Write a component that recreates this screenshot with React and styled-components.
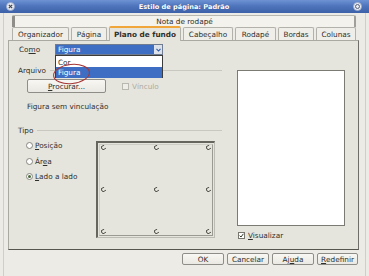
import React from 'react';
import styled, { createGlobalStyle } from 'styled-components';

const GlobalStyle = createGlobalStyle`
  html, body { margin: 0; padding: 0; }
  body {
    background: #ecebe5;
    font-family: "DejaVu Sans", "Liberation Sans", sans-serif;
    font-size: 7.3px;
    color: #2f2f2c;
  }
  u { text-decoration-thickness: 1px; text-underline-offset: 1px; }
`;

const Window = styled.div`
  width: 369px;
  height: 276px;
  display: flex;
  flex-direction: column;
  background: #ecebe5;
  overflow: hidden;
`;

const TitleBar = styled.div`
  height: 13px;
  flex: none;
  display: flex;
  align-items: center;
  justify-content: space-between;
  padding: 0 7px 0 6px;
  background: linear-gradient(#6e93d4, #4f75bd 45%, #3c61a8);
  color: #fff;
  font-weight: bold;
  font-size: 6.6px;
  text-shadow: 0 0 1px #2a4a8a;
`;

const Frame = styled.div`
  flex: 1;
  display: flex;
  flex-direction: column;
  margin: 0 3px;
  padding: 2px 6px 0 4px;
  border-left: 1px solid #d0cfc7;
  border-right: 1px solid #d0cfc7;
`;

const TopTab = styled.div`
  height: 12px;
  box-sizing: border-box;
  margin: 0 3px 0 4px;
  display: flex;
  align-items: center;
  justify-content: center;
  background: #f3f2ed;
  border: 1px solid #b9b8b0;
  border-left: 3px solid #8f8e88;
  border-right: 2px solid #a09f99;
  border-bottom: none;
  border-radius: 2px 2px 0 0;
`;

const TabRow = styled.div`
  display: flex;
  gap: 2px;
  height: 13px;
  padding-left: 4px;
  position: relative;
  z-index: 1;
`;

const Tab = styled.div`
  width: ${p => p.$w}px;
  box-sizing: border-box;
  display: flex;
  align-items: center;
  justify-content: center;
  white-space: nowrap;
  border: 1px solid #b3b2aa;
  border-bottom: none;
  border-radius: 2px 2px 0 0;
  background: ${p => (p.$active ? '#e6e5dd' : '#efeee8')};
  font-weight: ${p => (p.$active ? 'bold' : 'normal')};
  border-top: ${p => (p.$active ? '2px solid #f0a63a' : '1px solid #b3b2aa')};
  height: ${p => (p.$active ? 15 : 13)}px;
  margin-top: ${p => (p.$active ? -1 : 0)}px;
`;

const Panel = styled.div`
  height: 210px;
  box-sizing: border-box;
  display: flex;
  gap: 15px;
  padding: 3px 12px 0 9px;
  background: #e6e5dd;
  border: 1px solid #aaa9a1;
  border-right-color: #6f6f69;
  border-bottom-color: #56564f;
`;

const LeftCol = styled.div`
  width: 204px;
  display: flex;
  flex-direction: column;
`;

const RightCol = styled.div`
  width: 108px;
  display: flex;
  flex-direction: column;
`;

const ComoRow = styled.div`
  height: 11px;
  display: flex;
  align-items: center;
`;

const Label = styled.span`
  width: 36px;
  padding-left: 1px;
`;

const Combo = styled.div`
  position: relative;
  width: 108px;
  height: 11px;
  box-sizing: border-box;
  display: flex;
  border: 1px solid #6f7b90;
  background: #fff;
`;

const ComboValue = styled.div`
  flex: 1;
  display: flex;
  align-items: center;
  padding-left: 2px;
  background: #3d6ec3;
  color: #fff;
`;

const ComboArrow = styled.div`
  width: 8px;
  display: flex;
  align-items: center;
  justify-content: center;
  background: #dde2ea;
`;

const DropList = styled.div`
  position: absolute;
  top: 10px;
  left: -1px;
  width: 108px;
  height: 23px;
  box-sizing: border-box;
  padding-top: 1px;
  background: #fff;
  border: 1px solid #3c3c3a;
  z-index: 2;
`;

const DropItem = styled.div`
  height: ${p => (p.$sel ? 11 : 10)}px;
  display: flex;
  align-items: center;
  padding-left: 2px;
  background: ${p => (p.$sel ? '#3d6ec3' : 'transparent')};
  color: ${p => (p.$sel ? '#fff' : '#2f2f2c')};
`;

const Circle = styled.div`
  position: absolute;
  left: -3px;
  top: 19px;
  width: 35px;
  height: 18px;
  border: 1px solid #a53636;
  border-radius: 50%;
  transform: rotate(-6deg);
  z-index: 3;
`;

const SectionHead = styled.div`
  margin-top: ${p => p.$mt}px;
  height: 9px;
  display: flex;
  align-items: center;
  gap: 4px;
  &::after {
    content: '';
    flex: 1;
    height: 1px;
    background: #c9c8c0;
  }
`;

const ProcRow = styled.div`
  margin-top: 4px;
  height: 14px;
  padding-left: 9px;
  display: flex;
  align-items: center;
`;

const PushButton = styled.div`
  width: ${p => p.$w}px;
  height: ${p => p.$h || 12}px;
  box-sizing: border-box;
  display: flex;
  align-items: center;
  justify-content: center;
  background: linear-gradient(#f8f7f3, #e9e8e2);
  border: 1px solid #8e8d87;
  border-radius: 2px;
`;

const Check = styled.div`
  display: flex;
  align-items: center;
  gap: 3px;
  margin-left: ${p => p.$ml || 0}px;
  color: ${p => (p.$disabled ? '#acaba3' : '#2f2f2c')};
`;

const Box = styled.div`
  width: 7px;
  height: 7px;
  box-sizing: border-box;
  border: 1px solid ${p => (p.$disabled ? '#b8b7b0' : '#77766f')};
  background: ${p => (p.$disabled ? '#eeede8' : '#fff')};
  display: flex;
  align-items: center;
  justify-content: center;
`;

const Note = styled.div`
  margin-top: 9px;
  height: 10px;
  line-height: 10px;
  padding-left: 9px;
`;

const TypeRow = styled.div`
  margin-top: 6px;
  display: flex;
`;

const RadioCol = styled.div`
  width: 70px;
  padding-left: 8px;
  display: flex;
  flex-direction: column;
  gap: 6.5px;
`;

const RadioRow = styled.div`
  height: 9px;
  display: flex;
  align-items: center;
  gap: 2px;
`;

const Radio = styled.div`
  width: 7px;
  height: 7px;
  box-sizing: border-box;
  border-radius: 50%;
  border: 1px solid #86857e;
  background: #fff;
  display: flex;
  align-items: center;
  justify-content: center;
  &::after {
    content: '';
    width: 3px;
    height: 3px;
    border-radius: 50%;
    background: ${p => (p.$on ? '#4a6a3a' : 'transparent')};
  }
`;

const PosBox = styled.div`
  width: 119px;
  height: 97px;
  box-sizing: border-box;
  border-top: 2px solid #66665f;
  border-left: 2px solid #66665f;
  border-right: 1px solid #bdbcb4;
  border-bottom: 1px solid #bdbcb4;
  padding: 1px;
`;

const PosInner = styled.div`
  height: 100%;
  box-sizing: border-box;
  border: 1px solid #cfcec6;
  border-right-color: #9a9992;
  border-bottom-color: #9a9992;
  padding: 0 1px 1px 1px;
  display: grid;
  grid-template-columns: repeat(3, 5px);
  grid-template-rows: repeat(3, 5px);
  justify-content: space-between;
  align-content: space-between;
`;

const Mark = styled.div`
  width: 5px;
  height: 5px;
  box-sizing: border-box;
  border-radius: 50%;
  border: 1px solid #55554f;
  border-right-color: transparent;
  transform: rotate(-30deg);
`;

const Preview = styled.div`
  margin-top: 26px;
  height: 156px;
  box-sizing: border-box;
  background: #fff;
  border: 1px solid #7b7b74;
`;

const VisRow = styled.div`
  margin-top: 4px;
  height: 10px;
  padding-left: 1px;
  display: flex;
  align-items: center;
`;

const ButtonBar = styled.div`
  margin-top: 3px;
  display: flex;
  justify-content: flex-end;
  gap: 3px;
  padding-right: 1px;
`;

const CloseIcon = () => (
  <svg width="9" height="9" viewBox="0 0 9 9">
    <circle cx="4.5" cy="4.5" r="4" fill="#e9ecf3" stroke="#9aa9c8" strokeWidth="0.8" />
    <path d="M2.8 2.8 L6.2 6.2 M6.2 2.8 L2.8 6.2" stroke="#3b3f4a" strokeWidth="1.1" />
  </svg>
);

const MaxIcon = () => (
  <svg width="9" height="9" viewBox="0 0 9 9">
    <circle cx="4.5" cy="4.5" r="4" fill="#e9ecf3" stroke="#9aa9c8" strokeWidth="0.8" />
    <circle cx="4.5" cy="4.5" r="2" fill="none" stroke="#55607a" strokeWidth="1" />
  </svg>
);

const Chevron = () => (
  <svg width="5" height="4" viewBox="0 0 5 4">
    <path d="M0.5 0.8 L2.5 3 L4.5 0.8" fill="none" stroke="#2d5aa8" strokeWidth="1.1" />
  </svg>
);

const Tick = () => (
  <svg width="5" height="5" viewBox="0 0 5 5">
    <path d="M0.6 2.6 L2 4 L4.4 0.8" fill="none" stroke="#2f3a2a" strokeWidth="1" />
  </svg>
);

const tabs = [
  ['Organizador', 57],
  ['Página', 36],
  ['Plano de fundo', 72, true],
  ['Cabeçalho', 50],
  ['Rodapé', 41],
  ['Bordas', 36],
  ['Colunas', 40],
];

export default function App() {
  return (
    <Window>
      <GlobalStyle />
      <TitleBar>
        <CloseIcon />
        <span>Estilo de página: Padrão</span>
        <MaxIcon />
      </TitleBar>
      <Frame>
        <TopTab>Nota de rodapé</TopTab>
        <TabRow>
          {tabs.map(([t, w, a]) => (
            <Tab key={t} $w={w} $active={a}>{t}</Tab>
          ))}
        </TabRow>
        <Panel>
          <LeftCol>
            <ComoRow>
              <Label>Co<u>m</u>o</Label>
              <Combo>
                <ComboValue>Figura</ComboValue>
                <ComboArrow><Chevron /></ComboArrow>
                <DropList>
                  <DropItem>Cor</DropItem>
                  <DropItem $sel>Figura</DropItem>
                </DropList>
                <Circle />
              </Combo>
            </ComoRow>
            <SectionHead $mt={11}>Arquivo</SectionHead>
            <ProcRow>
              <PushButton $w={79} $h={14}><u>P</u>rocurar...</PushButton>
              <Check $ml={16} $disabled>
                <Box $disabled />
                <span>Vínculo</span>
              </Check>
            </ProcRow>
            <Note>Figura sem vinculação</Note>
            <SectionHead $mt={14}>Tipo</SectionHead>
            <TypeRow>
              <RadioCol>
                <RadioRow><Radio /><span><u>P</u>osição</span></RadioRow>
                <RadioRow><Radio /><span>Ár<u>e</u>a</span></RadioRow>
                <RadioRow><Radio $on /><span><u>L</u>ado a lado</span></RadioRow>
              </RadioCol>
              <PosBox>
                <PosInner>
                  {Array.from({ length: 9 }).map((_, i) => <Mark key={i} />)}
                </PosInner>
              </PosBox>
            </TypeRow>
          </LeftCol>
          <RightCol>
            <Preview />
            <VisRow>
              <Check>
                <Box><Tick /></Box>
                <span><u>V</u>isualizar</span>
              </Check>
            </VisRow>
          </RightCol>
        </Panel>
        <ButtonBar>
          <PushButton $w={42}>OK</PushButton>
          <PushButton $w={42}>Cancelar</PushButton>
          <PushButton $w={42}>Aj<u>u</u>da</PushButton>
          <PushButton $w={41}><u>R</u>edefinir</PushButton>
        </ButtonBar>
      </Frame>
    </Window>
  );
}
